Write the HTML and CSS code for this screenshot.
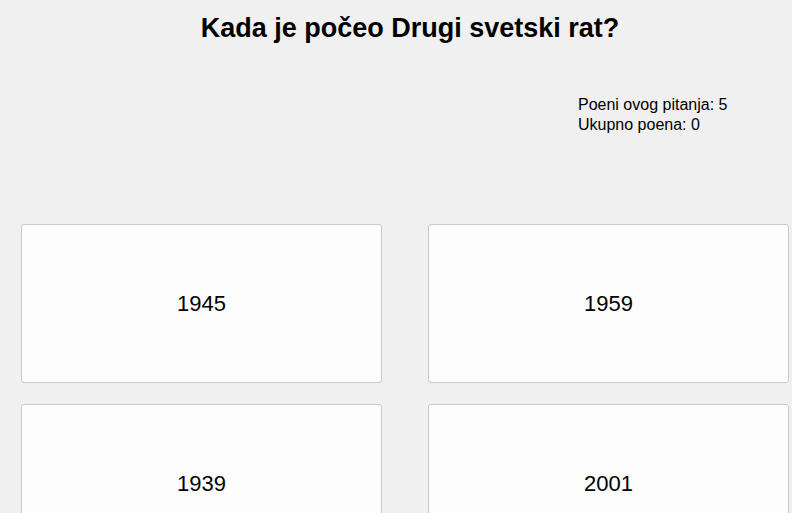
FILE: index.html
```html
<!DOCTYPE html>
<html>
<head>
<meta charset="utf-8">
<link rel="stylesheet" href="styles.css">
</head>
<body>
<div class="page">
  <h1 class="question">Kada je počeo Drugi svetski rat?</h1>
  <div class="score">
    <div>Poeni ovog pitanja: 5</div>
    <div>Ukupno poena: 0</div>
  </div>
  <div class="answers">
    <button class="answer">1945</button>
    <button class="answer">1959</button>
    <button class="answer">1939</button>
    <button class="answer">2001</button>
  </div>
</div>
</body>
</html>
```
FILE: styles.css
```css
html, body {
  margin: 0;
  padding: 0;
  background: #f0f0f0;
  overflow: hidden;
}
body {
  font-family: "Liberation Sans", Arial, sans-serif;
  color: #000;
}
.page {
  width: 792px;
  height: 513px;
  overflow: hidden;
}
.question {
  margin: 0;
  padding: 13px 0 0 28px;
  text-align: center;
  font-size: 27px;
  font-weight: bold;
  line-height: 30px;
}
.score {
  margin: 52px 0 0 578px;
  font-size: 16px;
  line-height: 20px;
}
.answers {
  display: grid;
  grid-template-columns: 361px 361px;
  grid-auto-rows: 159px;
  column-gap: 46px;
  row-gap: 21px;
  padding-left: 21px;
  margin-top: 89px;
}
.answer {
  box-sizing: border-box;
  background: #fdfdfd;
  border: 1px solid #c9c9c9;
  border-radius: 3px;
  font-family: "Liberation Sans", Arial, sans-serif;
  font-size: 22px;
  color: #000;
  padding: 0;
  margin: 0;
}
```
